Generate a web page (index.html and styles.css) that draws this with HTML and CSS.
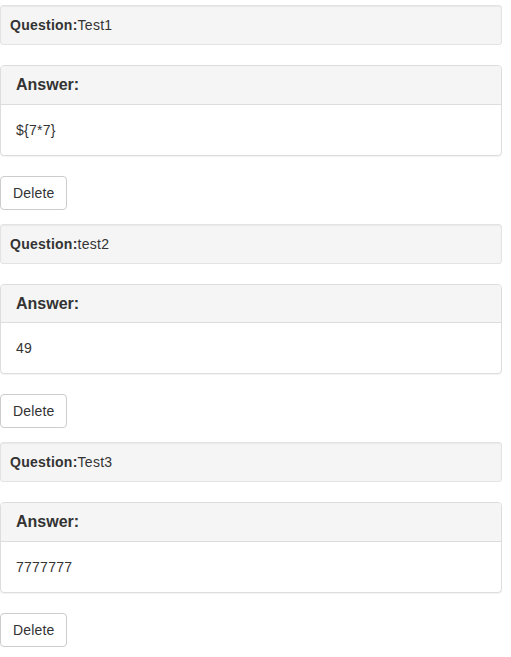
FILE: index.html
```html
<!DOCTYPE html>
<html>
<head>
<meta charset="utf-8">
<link rel="stylesheet" href="styles.css">
</head>
<body>
<div class="page">
  <div class="item">
    <div class="well"><strong>Question:</strong>Test1</div>
    <div class="panel">
      <div class="panel-heading"><h3 class="panel-title">Answer:</h3></div>
      <div class="panel-body">${7*7}</div>
    </div>
    <button class="btn">Delete</button>
  </div>
  <div class="item">
    <div class="well"><strong>Question:</strong>test2</div>
    <div class="panel">
      <div class="panel-heading"><h3 class="panel-title">Answer:</h3></div>
      <div class="panel-body">49</div>
    </div>
    <button class="btn">Delete</button>
  </div>
  <div class="item">
    <div class="well"><strong>Question:</strong>Test3</div>
    <div class="panel">
      <div class="panel-heading"><h3 class="panel-title">Answer:</h3></div>
      <div class="panel-body">7777777</div>
    </div>
    <button class="btn">Delete</button>
  </div>
</div>
</body>
</html>
```
FILE: styles.css
```css
* { box-sizing: border-box; }
html, body { margin: 0; padding: 0; background: #fff; }
body {
  font-family: "Liberation Sans", Arial, sans-serif;
  font-size: 14px;
  line-height: 20px;
  color: #333;
}
.page {
  width: 502px;
  padding-top: 5px;
  display: flex;
  flex-direction: column;
  gap: 14px;
}
.item {
  display: flex;
  flex-direction: column;
  align-items: flex-start;
}
.well {
  align-self: stretch;
  padding: 9px;
  background: #f5f5f5;
  border: 1px solid #e3e3e3;
  border-radius: 3px;
  box-shadow: inset 0 1px 1px rgba(0,0,0,.05);
  margin-bottom: 20px;
  letter-spacing: 0.25px;
}
.well strong { font-weight: bold; }
.panel {
  align-self: stretch;
  border: 1px solid #ddd;
  border-radius: 4px;
  background: #fff;
  box-shadow: 0 1px 1px rgba(0,0,0,.05);
  margin-bottom: 20px;
}
.panel-heading {
  padding: 10px 15px;
  background: #f5f5f5;
  border-bottom: 1px solid #ddd;
  border-radius: 3px 3px 0 0;
}
.panel-title {
  margin: 0;
  font-size: 16px;
  line-height: 17.6px;
  font-weight: bold;
  color: #333;
}
.panel-body {
  padding: 15px;
  letter-spacing: 0.25px;
}
.btn {
  font-family: "Liberation Sans", Arial, sans-serif;
  font-size: 14px;
  line-height: 20px;
  letter-spacing: 0.15px;
  color: #333;
  background: #fff;
  border: 1px solid #ccc;
  border-radius: 4px;
  padding: 6px 12px;
  margin: 0;
  height: 34px;
}
```
